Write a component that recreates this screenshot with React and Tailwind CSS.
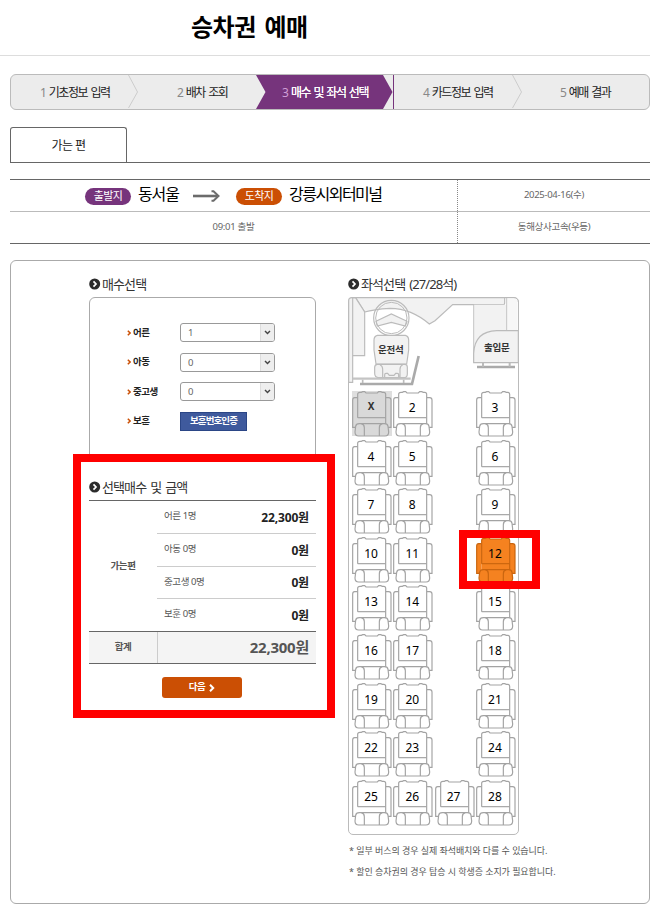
import clsx from "clsx";

const steps = [
  { no: 1, label: "기초정보 입력" },
  { no: 2, label: "배차 조회" },
  { no: 3, label: "매수 및 좌석 선택" },
  { no: 4, label: "카드정보 입력" },
  { no: 5, label: "예매 결과" },
];

const passengers = [
  { label: "어른", count: 1 },
  { label: "아동", count: 0 },
  { label: "중고생", count: 0 },
];

const fares = [
  { label: "어른 1명", price: "22,300원" },
  { label: "아동 0명", price: "0원" },
  { label: "중고생 0명", price: "0원" },
  { label: "보훈 0명", price: "0원" },
];

// null is the aisle
const seatRows = [
  ["X", 2, null, 3],
  [4, 5, null, 6],
  [7, 8, null, 9],
  [10, 11, null, 12],
  [13, 14, null, 15],
  [16, 17, null, 18],
  [19, 20, null, 21],
  [22, 23, null, 24],
  [25, 26, 27, 28],
];

const SectionTitle = ({ children }) => (
  <h2 className="flex h-4 items-center gap-[1px] text-[13px] leading-4 text-[#333] whitespace-nowrap tracking-[-0.9px] [word-spacing:1.5px]">
    <svg width="12" height="12" viewBox="0 0 12 12" className="shrink-0">
      <circle cx="5.7" cy="6" r="5.5" fill="#2b2b2b" />
      <path d="M4.500 3.400 L7 6 L4.500 8.600" fill="none" stroke="#fff" strokeWidth="1.700" />
    </svg>
    <span>{children}</span>
  </h2>
);

const StepArrow = () => (
  <div className="h-full w-0">
    <svg width="11" height="34" viewBox="0 0 11 34" className="max-w-none">
      <path d="M0.500 0 L9.500 17 L0.500 33" fill="none" stroke="#ccc" />
    </svg>
  </div>
);

const StepBar = () => (
  <ol className="mt-[18px] ml-[10px] flex h-9 w-[640px] overflow-hidden rounded-[6px] border border-[#bbb] bg-[#ececec]">
    {steps.map((step) => (
      <li
        key={step.no}
        className={clsx(
          "flex h-full shrink-0 items-center text-[12px] tracking-[-1.5px] whitespace-nowrap [word-spacing:1.8px]",
          step.no === 1 && "w-[117px]",
          step.no === 2 && "w-[128px]",
          step.no === 3 && "w-[138px]",
          step.no === 4 && "w-[118px]",
          step.no === 5 && "w-[138px]"
        )}
      >
        {step.no === 3 ? (
          <div className="relative flex h-full w-full items-center justify-center border-r border-[#76347c]">
            <svg className="absolute inset-0" width="137" height="34" viewBox="0 0 137 34">
              <path d="M0 0 H127 L136.500 17 L127 34 H0 L9.500 17 Z" fill="#76347c" />
            </svg>
            <span className="relative pt-[2px] pl-[1px] text-white [text-shadow:0_0_0.500px_#fff]">
              <span className="text-[#cf9fd6] [text-shadow:none]">{step.no}</span> {step.label}
            </span>
          </div>
        ) : (
          <span
            className={clsx(
              "flex-1 pt-[2px] text-[#222]",
              step.no === 1 && "pl-[29px]",
              step.no === 2 && "pl-[49px]",
              step.no === 4 && "pl-[29px]",
              step.no === 5 && "pl-[48px]"
            )}
          >
            <span className="text-[#888]">{step.no}</span> {step.label}
          </span>
        )}
        {(step.no === 1 || step.no === 4) && <StepArrow />}
      </li>
    ))}
  </ol>
);

const Badge = ({ className, children }) => (
  <span
    className={clsx(
      "mt-[1px] flex h-[17px] w-[46px] items-center justify-center rounded-full text-[11px] tracking-[-0.6px] text-white",
      className
    )}
  >
    {children}
  </span>
);

const RouteInfo = () => (
  <div className="mt-[16px] ml-[10px] w-[640px] border-y border-[#666] text-[9.500px] tracking-[-0.3px] text-[#666]">
    <div className="flex h-[32px] border-b border-[#bbb]">
      <div className="flex w-[448px] items-center border-r border-dotted border-[#888] pl-[75px] text-[16px] tracking-[-1.5px] whitespace-nowrap text-black">
        <Badge className="bg-[#76347c]">출발지</Badge>
        <span className="ml-[7px] w-[42px] pb-[3px] tracking-[-1.100px]">동서울</span>
        <svg width="27" height="12" viewBox="0 0 27 12" className="ml-[13px]">
          <path d="M0 6 H24" fill="none" stroke="#6b6b6b" strokeWidth="2.600" />
          <path d="M18.500 1.300 H20.500 L25.500 6 L20.500 10.700 H18.500" fill="none" stroke="#6b6b6b" strokeWidth="2" />
        </svg>
        <Badge className="ml-[16px] bg-[#cb4f04]">도착지</Badge>
        <span className="ml-[7px] pb-[3px]">강릉시외터미널</span>
      </div>
      <div className="flex flex-1 items-center justify-center">2025-04-16(수)</div>
    </div>
    <div className="flex h-[31px]">
      <div className="flex w-[448px] items-center justify-center border-r border-dotted border-[#888]">
        09:01 출발
      </div>
      <div className="flex flex-1 items-center justify-center">동해상사고속(우등)</div>
    </div>
  </div>
);

const RowLabel = ({ children }) => (
  <span className="flex w-[53px] items-center gap-[2px] text-[9.500px] font-bold tracking-[-0.5px] text-[#222]">
    <svg width="4" height="6" viewBox="0 0 4 6">
      <path d="M0.800 0.800 L3.100 3 L0.800 5.200" fill="none" stroke="#cb4f04" strokeWidth="1.500" />
    </svg>
    {children}
  </span>
);

const PassengerBox = () => (
  <div className="mt-[5px] flex h-[165px] w-[227px] flex-col gap-[10px] rounded-[6px] border border-[#aaa] pt-[25px] pl-[37px]">
    {passengers.map((p) => (
      <div key={p.label} className="flex h-[19.500px] items-center">
        <RowLabel>{p.label}</RowLabel>
        <div className="flex h-[19px] w-[95px] items-center rounded-[3px] border border-[#999] pl-[7px] text-[9.500px] text-[#666]">
          <span className="flex-1 pt-[1px]">{p.count}</span>
          <span className="flex h-full w-[14px] items-center justify-center rounded-r-[2px] border-l border-[#ddd] bg-[#eee]">
            <svg width="7" height="5" viewBox="0 0 7 5">
              <path d="M1 1 L3.500 3.600 L6 1" fill="none" stroke="#444" strokeWidth="1.400" />
            </svg>
          </span>
        </div>
      </div>
    ))}
    <div className="flex h-[19px] items-center">
      <RowLabel>보훈</RowLabel>
      <button className="h-[19px] w-[67px] border border-[#2b4686] bg-[#3f5a9d] pb-[1px] text-[9.500px] leading-[16px] font-bold tracking-[-0.9px] text-white">
        보훈번호인증
      </button>
    </div>
  </div>
);

const FareSummary = () => (
  <div className="mt-[5px] w-[227px] border-t border-[#666]">
    <div className="flex h-[130px]">
      <div className="flex w-[68px] items-center justify-center text-[9.500px] font-bold tracking-[-0.4px] text-[#555]">
        가는편
      </div>
      <div className="flex-1">
        {fares.map((fare, i) => (
          <div
            key={fare.label}
            className={clsx(
              "flex items-center justify-between px-[7px]",
              i < 2 ? "h-[33px]" : "h-[32px]",
              i < fares.length - 1 && "border-b border-[#ccc]"
            )}
          >
            <span className="pb-[1px] text-[9.500px] tracking-[-0.4px] text-[#555]">{fare.label}</span>
            <span className="pt-[1px] text-[12px] font-bold tracking-[-0.150px] text-[#222]">{fare.price}</span>
          </div>
        ))}
      </div>
    </div>
    <div className="flex h-[33px] border-y border-[#666] bg-[#f4f4f4] text-[#555]">
      <div className="flex w-[69px] items-center justify-center border-r border-[#ccc] text-[9.500px] font-bold tracking-[-0.4px]">
        합계
      </div>
      <div className="flex flex-1 items-center justify-end pr-[7px] text-[15px] font-bold tracking-[-0.250px]">
        22,300원
      </div>
    </div>
    <button className="mt-[13px] ml-[73px] flex h-[21px] w-[80px] items-center justify-center gap-[4px] rounded-[3px] bg-[#cb4f04] text-[9.500px] font-bold tracking-[-0.4px] text-white">
      다음
      <svg width="6" height="8" viewBox="0 0 6 8">
        <path d="M1 0.800 L4.200 4 L1 7.200" fill="none" stroke="#fff" strokeWidth="2" />
      </svg>
    </button>
  </div>
);

// driver area and entrance at the front of the bus
const BusFront = () => (
  <div className="relative h-[93px] w-[171px]">
    <svg width="171" height="90" viewBox="24 21 513 270" className="absolute top-[-1px] left-[-1px]" fill="none" stroke="#bbb" strokeWidth="3.500">
      <path d="M47 23 H494 V40 Q494 44 490 44 H338 L285 92 L268 102 Q215 56 150 55 Q100 58 74 66 Z" fill="#f2f2f2" />
      <path d="M38 24 H47 L74 66 V197 H38" fill="#f2f2f2" />
      <path d="M26 32 Q26 23 36 23 H38 V277 H26 Z" fill="#f2f2f2" />
      <path d="M401 44 H500 V122 H470 Q404 124 401 190 Z" fill="#f2f2f2" stroke="none" />
      <path d="M500 26 V122 H533 V34 Q533 26 525 26 Z" fill="#f7f7f7" stroke="none" />
      <path d="M494 23 H522 Q535 23 535 36" strokeWidth="3" />
      <path d="M401 218 V44 M500 24 V122" strokeWidth="2.500" />
      <path d="M401 218 V190 Q404 124 470 122 H535 V218 Z" fill="#f2f2f2" />
      <path d="M411 231 H525" strokeWidth="7" stroke="#aaa" />
      <path d="M429 219 V230 M509 219 V230" strokeWidth="6" />
      <path d="M108 94 L154 72 L201 94 L196 108 L154 97 L112 108 Z" fill="#f2f2f2" />
      <circle cx="154" cy="84" r="53" strokeWidth="3.500" />
      <circle cx="154" cy="84" r="47" strokeWidth="3" />
      <path d="M112 136 H196 Q206 139 206 150 V180 L200 222 H108 L102 180 V150 Q102 139 112 136 Z" fill="#f2f2f2" />
      <path d="M112 223 H196 Q202 224 202 232 V252 Q202 263 192 263 H116 Q104 263 104 250 V232 Q104 224 112 223 Z" fill="#f2f2f2" />
      <path d="M120 224 Q128 228 128 238 V262 M188 224 Q180 228 180 238 V262 M134 262 V254 Q134 250 138 250 H143 L148 256 H162 L167 250 H172 Q176 250 176 254 V262" />
      <path d="M38 266 H212" strokeWidth="7" stroke="#c4c4c4" />
      <path d="M60 282 H216 L236 198" strokeWidth="8" stroke="#aaa" />
      <path d="M68 269 V279 M191 269 V279" strokeWidth="5" />
    </svg>
    <span className="absolute top-[45px] left-[29px] text-[9.500px] leading-[14px] font-bold tracking-[-0.2px] text-[#333]">
      운전석
    </span>
    <span className="absolute top-[43px] left-[135px] text-[9.500px] leading-[14px] font-bold tracking-[-0.2px] text-[#333]">
      출입문
    </span>
  </div>
);

const Seat = ({ no }) => {
  const taken = no === "X";
  const selected = no === 12;
  const fill = taken ? "#d9d9d9" : selected ? "#f58220" : "#fff";
  const stroke = selected ? "#c9650f" : "#a3a3a3";
  return (
    <div className={clsx("relative h-[45px] w-10", taken && "bg-[#dedede]")}>
      <svg width="40" height="46" viewBox="0 0 120 138" fill={fill} stroke={stroke} strokeWidth="3.500" className="absolute inset-0">
        <path d="M17 20 H8 Q2 20 2 27 V109 H17" />
        <path d="M101 20 H110 Q117 20 117 27 V109 H101" />
        <path d="M17 78 H101 V109 H17 Z" stroke="none" />
        <path d="M17 80 V10 Q17 4 24 4 H28 L32 2 H38 L42 6 H76 L80 2 H86 L91 4 H95 Q101 4 101 10 V100" />
        <path d="M17 80 H101" />
        <path d="M22 98 H97 Q107 98 108 106 L110 123 Q110 135 99 135 H20 Q9 135 9 123 L11 106 Q12 98 22 98 Z" />
        <path d="M28 98 Q37 100 37 110 V135 M91 98 Q82 100 82 110 V135" fill="none" />
      </svg>
      <span
        className={clsx(
          "relative flex justify-center pr-[2px] leading-4",
          taken ? "pt-[7px] text-[10px] font-bold text-[#333]" : "pt-[9px] text-[12px] text-black"
        )}
      >
        {no}
      </span>
    </div>
  );
};

const SeatMap = () => (
  <div className="mt-[5px] h-[538px] w-[171px] rounded-[5px] border border-[#bbb]">
    <BusFront />
    <div className="flex flex-col gap-[3.600px] pl-[3px]">
      {seatRows.map((row) => (
        <div key={row[0]} className="flex gap-[1.300px]">
          {row.map((no, i) => (no ? <Seat key={no} no={no} /> : <div key={i} className="w-10" />))}
        </div>
      ))}
    </div>
  </div>
);

const App = () => {
  return (
    <div className="relative h-[909px] w-[656px] overflow-hidden bg-white font-['Noto_Sans','Noto_Sans_CJK_KR',sans-serif]">
      <h1 className="flex h-14 w-[650px] items-center border-b border-[#ddd] pb-[2px] pl-[191px] text-[24px] font-bold tracking-[-0.5px] text-black [word-spacing:3px]">
        승차권 예매
      </h1>
      <StepBar />

      <div className="mt-[17px] ml-[10px] flex h-9 w-[640px] border-b border-[#666]">
        <div className="flex h-9 w-[117px] items-center justify-center rounded-t-[3px] border border-b-0 border-[#666] text-[12px] tracking-[-0.5px] text-[#222]">
          가는 편
        </div>
      </div>

      <RouteInfo />

      <main className="mt-[16px] ml-[10px] flex h-[644px] w-[640px] rounded-[6px] border border-[#aaa] pt-[15px] pl-[78px]">
        <section className="w-[259px]">
          <SectionTitle>매수선택</SectionTitle>
          <PassengerBox />
          <div className="h-[17px]" />
          <SectionTitle>선택매수 및 금액</SectionTitle>
          <FareSummary />
        </section>
        <section>
          <SectionTitle>좌석선택 (27/28석)</SectionTitle>
          <SeatMap />
          <ul className="mt-[5px] pl-[1px] text-[9px] leading-[21px] tracking-[-0.050px] whitespace-nowrap text-[#555]">
            <li>* 일부 버스의 경우 실제 좌석배치와 다를 수 있습니다.</li>
            <li>* 할인 승차권의 경우 탑승 시 학생증 소지가 필요합니다.</li>
          </ul>
        </section>
      </main>

      {/* highlight frames over the fare summary and the selected seat */}
      <div className="absolute top-[454px] left-[73px] h-[264px] w-[262px] border-8 border-[#f00]" />
      <div className="absolute top-[530px] left-[459px] h-[59px] w-[81px] border-8 border-[#f00]" />
    </div>
  );
};

export default App;
